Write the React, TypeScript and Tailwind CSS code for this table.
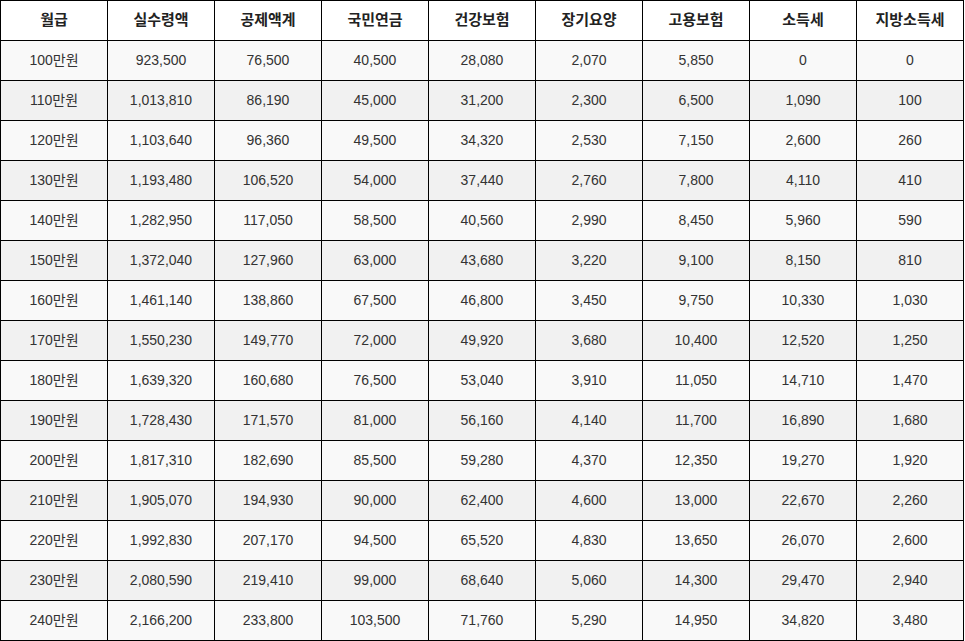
const headers = ['월급', '실수령액', '공제액계', '국민연금', '건강보험', '장기요양', '고용보험', '소득세', '지방소득세']

const rows: string[][] = [
  ['100만원', '923,500', '76,500', '40,500', '28,080', '2,070', '5,850', '0', '0'],
  ['110만원', '1,013,810', '86,190', '45,000', '31,200', '2,300', '6,500', '1,090', '100'],
  ['120만원', '1,103,640', '96,360', '49,500', '34,320', '2,530', '7,150', '2,600', '260'],
  ['130만원', '1,193,480', '106,520', '54,000', '37,440', '2,760', '7,800', '4,110', '410'],
  ['140만원', '1,282,950', '117,050', '58,500', '40,560', '2,990', '8,450', '5,960', '590'],
  ['150만원', '1,372,040', '127,960', '63,000', '43,680', '3,220', '9,100', '8,150', '810'],
  ['160만원', '1,461,140', '138,860', '67,500', '46,800', '3,450', '9,750', '10,330', '1,030'],
  ['170만원', '1,550,230', '149,770', '72,000', '49,920', '3,680', '10,400', '12,520', '1,250'],
  ['180만원', '1,639,320', '160,680', '76,500', '53,040', '3,910', '11,050', '14,710', '1,470'],
  ['190만원', '1,728,430', '171,570', '81,000', '56,160', '4,140', '11,700', '16,890', '1,680'],
  ['200만원', '1,817,310', '182,690', '85,500', '59,280', '4,370', '12,350', '19,270', '1,920'],
  ['210만원', '1,905,070', '194,930', '90,000', '62,400', '4,600', '13,000', '22,670', '2,260'],
  ['220만원', '1,992,830', '207,170', '94,500', '65,520', '4,830', '13,650', '26,070', '2,600'],
  ['230만원', '2,080,590', '219,410', '99,000', '68,640', '5,060', '14,300', '29,470', '2,940'],
  ['240만원', '2,166,200', '233,800', '103,500', '71,760', '5,290', '14,950', '34,820', '3,480'],
]

export default function App() {
  return (
    <div className="bg-white font-['Liberation_Sans','Noto_Sans_CJK_KR',sans-serif]">
      <table className="w-[964px] table-fixed border-collapse border border-black">
        <thead>
          <tr className="h-[40px] bg-white">
            {headers.map((h) => (
              <th
                key={h}
                className="border border-black p-0 text-center text-[15px] font-bold text-[#222]"
              >
                {h}
              </th>
            ))}
          </tr>
        </thead>
        <tbody>
          {rows.map((row, i) => (
            <tr key={row[0]} className={i % 2 === 0 ? 'h-[40px] bg-[#f9f9f9]' : 'h-[40px] bg-[#f1f1f1]'}>
              {row.map((cell, j) => (
                <td key={j} className="border border-black p-0 text-center text-[14px] text-[#333]">
                  {cell}
                </td>
              ))}
            </tr>
          ))}
        </tbody>
      </table>
    </div>
  )
}
